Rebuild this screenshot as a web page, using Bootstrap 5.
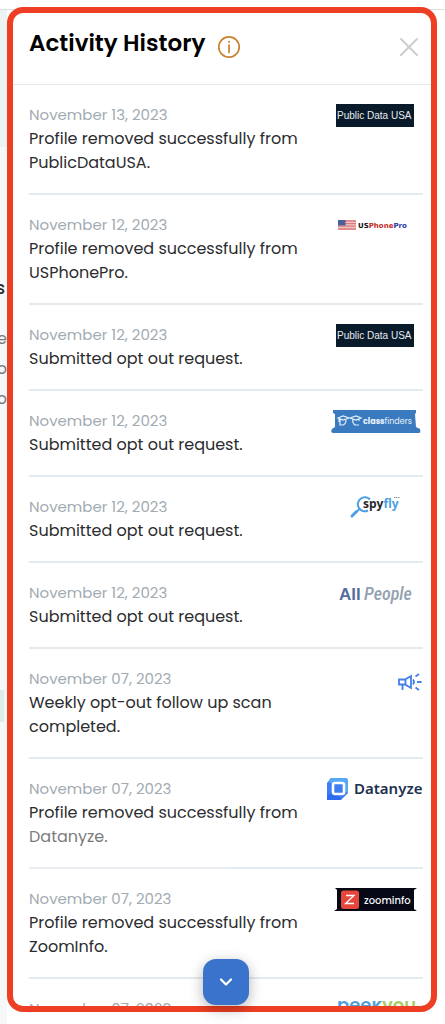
<!DOCTYPE html>
<html lang="en">
<head>
<meta charset="utf-8">
<meta name="viewport" content="width=device-width, initial-scale=1">
<title>Activity History</title>
<link href="https://cdn.jsdelivr.net/npm/bootstrap@5.3.0/dist/css/bootstrap.min.css" rel="stylesheet">
<style>
  body { font-family: Poppins, Inter, sans-serif; background: #fff; color: #2b2c2e; }
  .stage { padding: 7px 8px 12px 7px; }
  .topline { height: 10px; border-bottom: 1px solid #dcdedf; }
  .backdrop { z-index: 0; }
  .strip { width: 7px; background: linear-gradient(#edf2f3 0 137px, #f6f7f8 137px); font-size: 16px; line-height: 30px; }
  .strip p, .strip h2 { direction: rtl; white-space: nowrap; }
  .strip h2 { font-size: 18px; line-height: 30px; margin: 263px 0 21px; padding-right: 2px; }
  .strip p { color: #77797c; }
  .strip .tag { width: 4px; height: 32px; margin-top: 276px; background: #dcece6; }
  .panel { z-index: 1; min-height: 0; border: 6px solid #ee3f24; border-radius: 16px; }
  .panel-head { height: 72px; padding: 0 12px 12px 16px; border-bottom: 1px solid #e4eaee; }
  .panel-head h1 { font-size: 23px; line-height: 32px; font-weight: 600; color: #000; }
  .icon-btn { border: 0; background: none; padding: 0; line-height: 0; }
  .feed { padding: 0 8px 0 16px; }
  .entry { padding: 19px 0 18px; border-bottom: 2px solid #e4eaee; }
  .entry time { display: block; margin-bottom: 1px; font-size: 15px; line-height: 22px; color: #a2abb2; }
  .entry p { font-size: 16px; line-height: 24px; max-width: 280px; }
  .brand { width: 100px; height: 24px; overflow: visible; }
  .veiled::after { content: ""; position: absolute; left: -8px; top: 58px; width: 210px; height: 72px;
    background: linear-gradient(rgba(255,255,255,.2), rgba(255,255,255,.4) 20%, rgba(255,255,255,.1)); }
  .more { padding: 0 8px 1px 16px; pointer-events: none; }
  .more button { width: 46px; height: 46px; border: 0; border-radius: 13px; background: #3973cc; pointer-events: auto;
    box-shadow: 0 4px 14px rgba(0,0,0,.3); }
</style>
</head>
<body>
<div class="stage vh-100 position-relative d-flex flex-column overflow-hidden">

  <div class="backdrop position-absolute top-0 start-0 w-100 h-100 d-flex flex-column" aria-hidden="true">
    <div class="topline"></div>
    <div class="strip flex-grow-1 overflow-hidden">
      <h2>s</h2>
      <p class="m-0">e</p>
      <p class="m-0">o</p>
      <p class="m-0">o</p>
      <div class="tag"></div>
    </div>
  </div>

  <main class="panel position-relative bg-white flex-grow-1 d-flex flex-column">
    <header class="panel-head d-flex align-items-center flex-shrink-0">
      <h1 class="m-0">Activity History</h1>
      <button class="icon-btn ms-2 ps-1 pt-2" type="button" aria-label="About activity history">
        <svg width="24" height="24" viewBox="0 0 24 24" fill="none" stroke="#c9822f" stroke-width="1.7"><circle cx="12" cy="12" r="10.2"/><path d="M12 10v7.5" stroke-linecap="round"/><circle cx="12" cy="6.8" r=".7" fill="#c9822f" stroke-width=".8"/></svg>
      </button>
      <button class="icon-btn ms-auto pt-2" type="button" aria-label="Close">
        <svg width="20" height="20" viewBox="0 0 20 20" stroke="#cdcdcd" stroke-width="2" stroke-linecap="round"><path d="M2 2l16 16M18 2L2 18"/></svg>
      </button>
    </header>

    <div class="feed flex-grow-1 overflow-hidden">
      <article class="entry d-flex justify-content-between">
        <div><time datetime="2023-11-13">November 13, 2023</time><p class="m-0">Profile removed successfully from PublicDataUSA.</p></div>
        <svg class="brand flex-shrink-0" viewBox="0 0 100 24" role="img" aria-label="Public Data USA"><rect x="13" width="78" height="23" fill="#091b2b"/><text x="14" y="15" font-family="Liberation Sans" font-size="10" fill="#e8ebee">Public Data USA</text></svg>
      </article>

      <article class="entry d-flex justify-content-between">
        <div><time datetime="2023-11-12">November 12, 2023</time><p class="m-0">Profile removed successfully from USPhonePro.</p></div>
        <svg class="brand flex-shrink-0" viewBox="0 0 100 24" role="img" aria-label="USPhonePro"><rect x="15" y="6" width="18" height="10" fill="#f0c6c6"/><path d="M15 7h18M15 9.6h18M15 12.2h18M15 15h18" stroke="#d8797b" stroke-width="1.3"/><rect x="15" y="6" width="7.500" height="5.500" fill="#4d5f96"/><text x="35" y="14" font-family="DejaVu Sans" font-weight="700" font-size="7" fill="#111">US<tspan fill="#c22a27">Phone</tspan><tspan fill="#2638a8">Pro</tspan></text></svg>
      </article>

      <article class="entry d-flex justify-content-between">
        <div><time datetime="2023-11-12">November 12, 2023</time><p class="m-0">Submitted opt out request.</p></div>
        <svg class="brand flex-shrink-0" viewBox="0 0 100 24" role="img" aria-label="Public Data USA"><rect x="13" width="78" height="23" fill="#091b2b"/><text x="14" y="15" font-family="Liberation Sans" font-size="10" fill="#e8ebee">Public Data USA</text></svg>
      </article>

      <article class="entry d-flex justify-content-between">
        <div><time datetime="2023-11-12">November 12, 2023</time><p class="m-0">Submitted opt out request.</p></div>
        <svg class="brand flex-shrink-0" viewBox="0 0 100 24" role="img" aria-label="Classfinders"><path d="M10 0h83v3l-1 1 1 13 4 2q1 4-1 4H10q-3-1-1-4l3-2V4l-2-1z" fill="#3a7bbf"/><g fill="none" stroke="#e4effa" stroke-width="1.200"><path d="M15 8l5-2 6 2-6 2zM17 9v6h3q3-1 3-5M27 8l6-2 5 2-5 2zM36 15h-4q-3-2-2-6M36 9v2M16 8v4"/></g><text x="40" y="14" font-family="Poppins" font-size="8" fill="#eaf3fc"><tspan font-weight="700">class</tspan>finders</text></svg>
      </article>

      <article class="entry d-flex justify-content-between">
        <div><time datetime="2023-11-12">November 12, 2023</time><p class="m-0">Submitted opt out request.</p></div>
        <svg class="brand flex-shrink-0" viewBox="0 0 100 24" role="img" aria-label="Spyfly"><path d="M47 3.500A7 7 0 1 0 45 14.500" fill="none" stroke="#4c9fe2" stroke-width="2"/><path d="M36.500 13l-3 3" stroke="#4c9fe2" stroke-width="2"/><path d="M33.500 15.500L29 20" stroke="#4c9fe2" stroke-width="3" stroke-linecap="round"/><text x="40" y="12" font-family="Open Sans" font-weight="700" font-size="12" fill="#26282c">spy<tspan fill="#4c9fe2">fly</tspan></text><path d="M71 1.500h6" stroke="#999" stroke-width="1.200" stroke-dasharray="1.500 .5"/></svg>
      </article>

      <article class="entry d-flex justify-content-between">
        <div><time datetime="2023-11-12">November 12, 2023</time><p class="m-0">Submitted opt out request.</p></div>
        <svg class="brand flex-shrink-0" viewBox="0 0 100 24" role="img" aria-label="All People"><text x="16" y="18" font-family="Liberation Sans" font-weight="700" font-size="17" fill="#566d9c">All</text><text x="41" y="18" font-family="Roboto Condensed, Roboto" font-style="italic" font-weight="500" font-size="18" fill="#93a1b0">People</text></svg>
      </article>

      <article class="entry d-flex justify-content-between">
        <div><time datetime="2023-11-07">November 07, 2023</time><p class="m-0">Weekly opt-out follow up scan completed.</p></div>
        <svg class="brand flex-shrink-0" viewBox="0 0 100 24" role="img" aria-label="Announcement" fill="none" stroke="#447fe8" stroke-width="1.800"><path d="M76 11.500h6l6-3.500v12l-6-3.500h-6zM79.500 16.500V22M82.500 11.500v5"/><path d="M90 11.500q2 2.500 0 5M92.500 8.500L96 6M94 14h4.500M92.500 19.500L96 22"/></svg>
      </article>

      <article class="entry veiled position-relative d-flex justify-content-between">
        <div><time datetime="2023-11-07">November 07, 2023</time><p class="m-0">Profile removed successfully from Datanyze.</p></div>
        <svg class="brand flex-shrink-0" viewBox="0 0 100 24" role="img" aria-label="Datanyze"><path d="M8 0h14q3 0 3 4v11l-7 7H4V5z" fill="#3f7df0"/><path d="M8 0h14q3 0 3 4v11l-6-3V6h-9L5 4z" fill="#55a9f5"/><path d="M4 17l6-2h5l3 7H4z" fill="#2e6bf0"/><rect x="10" y="5" width="11" height="11" rx="2" fill="#3e7ef0" stroke="#fff" stroke-width="2.600"/><text x="31" y="16" font-family="Noto Sans" font-weight="600" font-size="15" fill="#20304f">Datanyze</text></svg>
      </article>

      <article class="entry d-flex justify-content-between">
        <div><time datetime="2023-11-07">November 07, 2023</time><p class="m-0">Profile removed successfully from ZoomInfo.</p></div>
        <svg class="brand flex-shrink-0" viewBox="0 0 100 24" role="img" aria-label="ZoomInfo"><path d="M12 0h82l-3 2v19l3 2H11l3-2V2z" fill="#060816"/><rect x="18" y="2.500" width="18" height="18.500" rx="2.500" fill="#e5473c"/><path d="M23 7.500h8l-8.500 8H31" fill="none" stroke="#fff" stroke-width="1.300"/><text x="41" y="16" font-family="Poppins" font-weight="500" font-size="10" fill="#f4f4f6">zoominfo</text></svg>
      </article>

      <article class="entry d-flex justify-content-between">
        <div><time datetime="2023-11-07">November 07, 2023</time><p class="m-0">Profile removed successfully from PeekYou.</p></div>
        <svg class="brand flex-shrink-0" viewBox="0 0 100 24" role="img" aria-label="PeekYou"><clipPath id="pk"><rect y="3" width="100" height="21"/></clipPath><text x="14" y="13" clip-path="url(#pk)" font-family="Poppins" font-weight="600" font-size="18" fill="#559fd8">peek<tspan fill="#a9cd64">you</tspan></text></svg>
      </article>
    </div>

    <div class="more position-absolute bottom-0 start-0 end-0 d-flex justify-content-center">
      <button class="d-flex align-items-center justify-content-center" type="button" aria-label="Scroll down">
        <svg width="16" height="16" viewBox="0 0 16 16" fill="none" stroke="#fff" stroke-width="2.200" stroke-linecap="round" stroke-linejoin="round"><path d="M3 5.500l5 5 5-5"/></svg>
      </button>
    </div>
  </main>
</div>
<script src="https://cdn.jsdelivr.net/npm/bootstrap@5.3.0/dist/js/bootstrap.bundle.min.js"></script>
</body>
</html>
